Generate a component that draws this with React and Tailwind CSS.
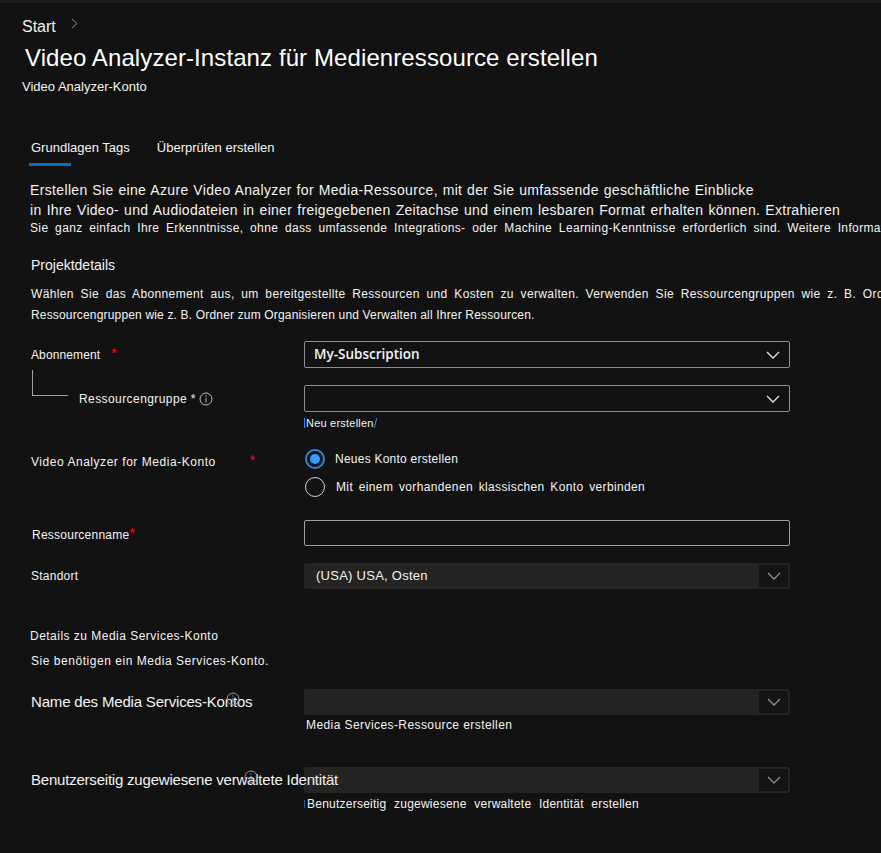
import React from "react";

function Chevron({ className = "" }) {
  return (
    <svg width="14" height="8" viewBox="0 0 14 8" className={className} fill="none">
      <polyline points="1,1 7,7 13,1" stroke="currentColor" strokeWidth="1.3" />
    </svg>
  );
}

function Info({ className = "" }) {
  return (
    <svg width="14" height="14" viewBox="0 0 14 14" className={className} fill="none">
      <circle cx="7" cy="7" r="6" stroke="currentColor" strokeWidth="1" />
      <line x1="7" y1="6" x2="7" y2="10.5" stroke="currentColor" strokeWidth="1" />
      <circle cx="7" cy="4" r="0.7" fill="currentColor" />
    </svg>
  );
}

function BorderSelect({ value, bold }) {
  return (
    <div className="w-[486px] h-[27px] border border-[#8d8d8d] rounded-[2px] bg-[#121212] flex items-center justify-between pl-[9px] pr-[9px]">
      <span className={bold ? "text-[13.5px] font-semibold text-[#f4f4f4] font-['Open_Sans',sans-serif]" : ""}>{value}</span>
      <Chevron className="text-[#e6e6e6]" />
    </div>
  );
}

function GraySelect({ value }) {
  return (
    <div className="w-[486px] h-[26px] rounded-[2px] bg-[#252423] flex items-center justify-between pl-[12px] pr-[2px]">
      <span className="text-[13px] tracking-[0.02em] text-[#f2f2f2]">{value}</span>
      <div className="w-[29px] h-[22px] bg-[#141414] flex items-center justify-center">
        <Chevron className="text-[#8f8f8f]" />
      </div>
    </div>
  );
}

export default function App() {
  return (
    <div className="w-[881px] min-h-[853px] bg-[#121212] text-[#f2f2f2] overflow-hidden font-['Liberation_Sans',Arial,sans-serif]">
      <div className="h-[3px] bg-[#1e1e1e]" />
      <div className="pl-[22px]">
        <div className="mt-[14px] h-[20px] flex items-center gap-[15px]">
          <span className="text-[16px] leading-[20px] text-[#f0f0f0]">Start</span>
          <svg width="7" height="11" viewBox="0 0 7 11" fill="none" className="text-[#8a8a8a] -mt-[8px]">
            <polyline points="1,1 6,5.5 1,10" stroke="currentColor" strokeWidth="1" />
          </svg>
        </div>
        <div className="mt-[7px] ml-[3px] text-[24px] leading-[28px] tracking-[0.004em] whitespace-nowrap text-white">
          Video Analyzer-Instanz für Medienressource erstellen
        </div>
        <div className="mt-[7px] text-[13px] leading-[16px] whitespace-nowrap">Video Analyzer-Konto</div>
      </div>

      <div className="pl-[31px]">
        {/* Tabs */}
        <div className="mt-[45px] flex text-[13px] leading-[16px] whitespace-nowrap">
          <span>Grundlagen Tags</span>
          <span className="ml-[27px]">Überprüfen erstellen</span>
        </div>
        <div className="mt-[7px] -ml-[2px] w-[42px] h-[3px] bg-[#0f6cbd]" />

        {/* Intro */}
        <div className="mt-[14px] -ml-[1px] whitespace-nowrap">
          <div className="text-[14px] leading-[20px] tracking-[0.025em] [word-spacing:0.5px]">
            Erstellen Sie eine Azure Video Analyzer for Media-Ressource, mit der Sie umfassende geschäftliche Einblicke
          </div>
          <div className="text-[14px] leading-[20px] tracking-[0.02em] [word-spacing:1px]">
            in Ihre Video- und Audiodateien in einer freigegebenen Zeitachse und einem lesbaren Format erhalten können. Extrahieren
          </div>
          <div className="text-[12px] leading-[16px] tracking-[0.03em] [word-spacing:3px]">
            Sie ganz einfach Ihre Erkenntnisse, ohne dass umfassende Integrations- oder Machine Learning-Kenntnisse erforderlich sind. Weitere Informationen
          </div>
        </div>

        <div className="mt-[19px] text-[14px] leading-[20px]">Projektdetails</div>
        <div className="mt-[11px] text-[12px] leading-[16px] whitespace-nowrap tracking-[0.03em] [word-spacing:3px]">
          Wählen Sie das Abonnement aus, um bereitgestellte Ressourcen und Kosten zu verwalten. Verwenden Sie Ressourcengruppen wie z. B. Ordner
        </div>
        <div className="mt-[5px] text-[12px] leading-[16px] tracking-[0.014em] whitespace-nowrap">
          Ressourcengruppen wie z. B. Ordner zum Organisieren und Verwalten all Ihrer Ressourcen.
        </div>

        {/* Abonnement */}
        <div className="mt-[18px] flex items-center">
          <div className="w-[273px] flex items-center text-[12px]">
            <span className="tracking-[0.01em]">Abonnement</span>
            <span className="ml-[11px] -mt-[3px] text-[#e81123] text-[14px]">*</span>
          </div>
          <BorderSelect value="My-Subscription" bold />
        </div>

        {/* Ressourcengruppe */}
        <div className="mt-[17px] flex">
          <div className="w-[273px] h-[27px] flex items-center">
            <div className="self-start ml-[1px] -mt-[15px] w-[36px] h-[26px] border-l border-b border-[#a0a0a0]" />
            <span className="ml-[11px] mt-[1px] text-[12px] tracking-[0.035em] whitespace-nowrap">Ressourcengruppe *</span>
            <Info className="ml-[3px] text-[#bdbdbd]" />
          </div>
          <div>
            <BorderSelect value="" />
            <div className="mt-[4px] flex items-center text-[11px] leading-[14px]">
              <span className="w-[1px] h-[10px] bg-[#2f8cff]" />
              <span className="ml-[1px] tracking-[0.02em]">Neu erstellen</span>
              <span className="w-[1px] h-[10px] bg-[#2f8cff] ml-[1px] skew-x-[-15deg]" />
            </div>
          </div>
        </div>

        {/* Video Analyzer for Media-Konto */}
        <div className="mt-[19px] flex">
          <div className="w-[273px] flex items-start pt-[4px] text-[12px] whitespace-nowrap">
            <span className="tracking-[0.045em]">Video Analyzer for Media-Konto</span>
            <span className="ml-[34px] -mt-[3px] text-[#e81123] text-[14px]">*</span>
          </div>
          <div className="flex flex-col gap-[8px]">
            <div className="flex items-center">
              <span className="w-[20px] h-[20px] ml-[1px] rounded-full border-2 border-[#2b88d8] flex items-center justify-center">
                <span className="w-[10px] h-[10px] rounded-full bg-[#3a9bff]" />
              </span>
              <span className="ml-[10px] text-[12px] tracking-[0.02em]">Neues Konto erstellen</span>
            </div>
            <div className="flex items-center">
              <span className="w-[20px] h-[20px] ml-[1px] rounded-full border-[1.5px] border-[#d0d0d0]" />
              <span className="ml-[11px] text-[12px] tracking-[0.03em] [word-spacing:2px]">Mit einem vorhandenen klassischen Konto verbinden</span>
            </div>
          </div>
        </div>

        {/* Ressourcenname */}
        <div className="mt-[23px] flex items-center">
          <div className="w-[273px] pl-[1px] pt-[3px] text-[12px] flex">
            <span className="tracking-[0.02em]">Ressourcenname</span>
            <span className="-mt-[3px] text-[#e81123] text-[14px]">*</span>
          </div>
          <div className="w-[486px] h-[26px] border border-[#a0a0a0] rounded-[2px] bg-[#121212]" />
        </div>

        {/* Standort */}
        <div className="mt-[17px] flex items-center">
          <div className="w-[273px] text-[12px] tracking-[0.02em]">Standort</div>
          <GraySelect value="(USA) USA, Osten" />
        </div>

        <div className="mt-[39px] -ml-[1px] text-[12px] leading-[16px] tracking-[0.04em]">Details zu Media Services-Konto</div>
        <div className="mt-[9px] text-[12px] leading-[16px] tracking-[0.045em]">Sie benötigen ein Media Services-Konto.</div>

        {/* Name des Media Services-Kontos */}
        <div className="mt-[20px] flex">
          <div className="w-[273px] h-[26px] flex items-center">
            <span className="relative text-[15px] tracking-[-0.012em] whitespace-nowrap">
              Name des Media Services-Kontos
              <Info className="absolute left-[195px] top-[1px] text-[#9a9a9a]" />
            </span>
          </div>
          <div>
            <GraySelect value="" />
            <div className="mt-[3px] ml-[2px] text-[12px] leading-[14px] tracking-[0.035em]">Media Services-Ressource erstellen</div>
          </div>
        </div>

        {/* Benutzerseitig zugewiesene */}
        <div className="mt-[35px] flex">
          <div className="w-[273px] h-[26px] flex items-center relative z-10">
            <span className="relative text-[15px] tracking-[-0.014em] whitespace-nowrap">
              Benutzerseitig zugewiesene verwaltete Identität
              <Info className="absolute left-[213px] top-[1px] text-[#9a9a9a]" />
            </span>
          </div>
          <div>
            <GraySelect value="" />
            <div className="mt-[4px] flex items-center text-[12px] leading-[14px] tracking-[0.02em] [word-spacing:4px]">
              <span className="w-[1px] h-[8px] bg-[#1e5aa8]" />
              <span className="ml-[2px]">Benutzerseitig zugewiesene verwaltete Identität erstellen</span>
            </div>
          </div>
        </div>
        <div className="h-[40px]" />
      </div>
    </div>
  );
}
